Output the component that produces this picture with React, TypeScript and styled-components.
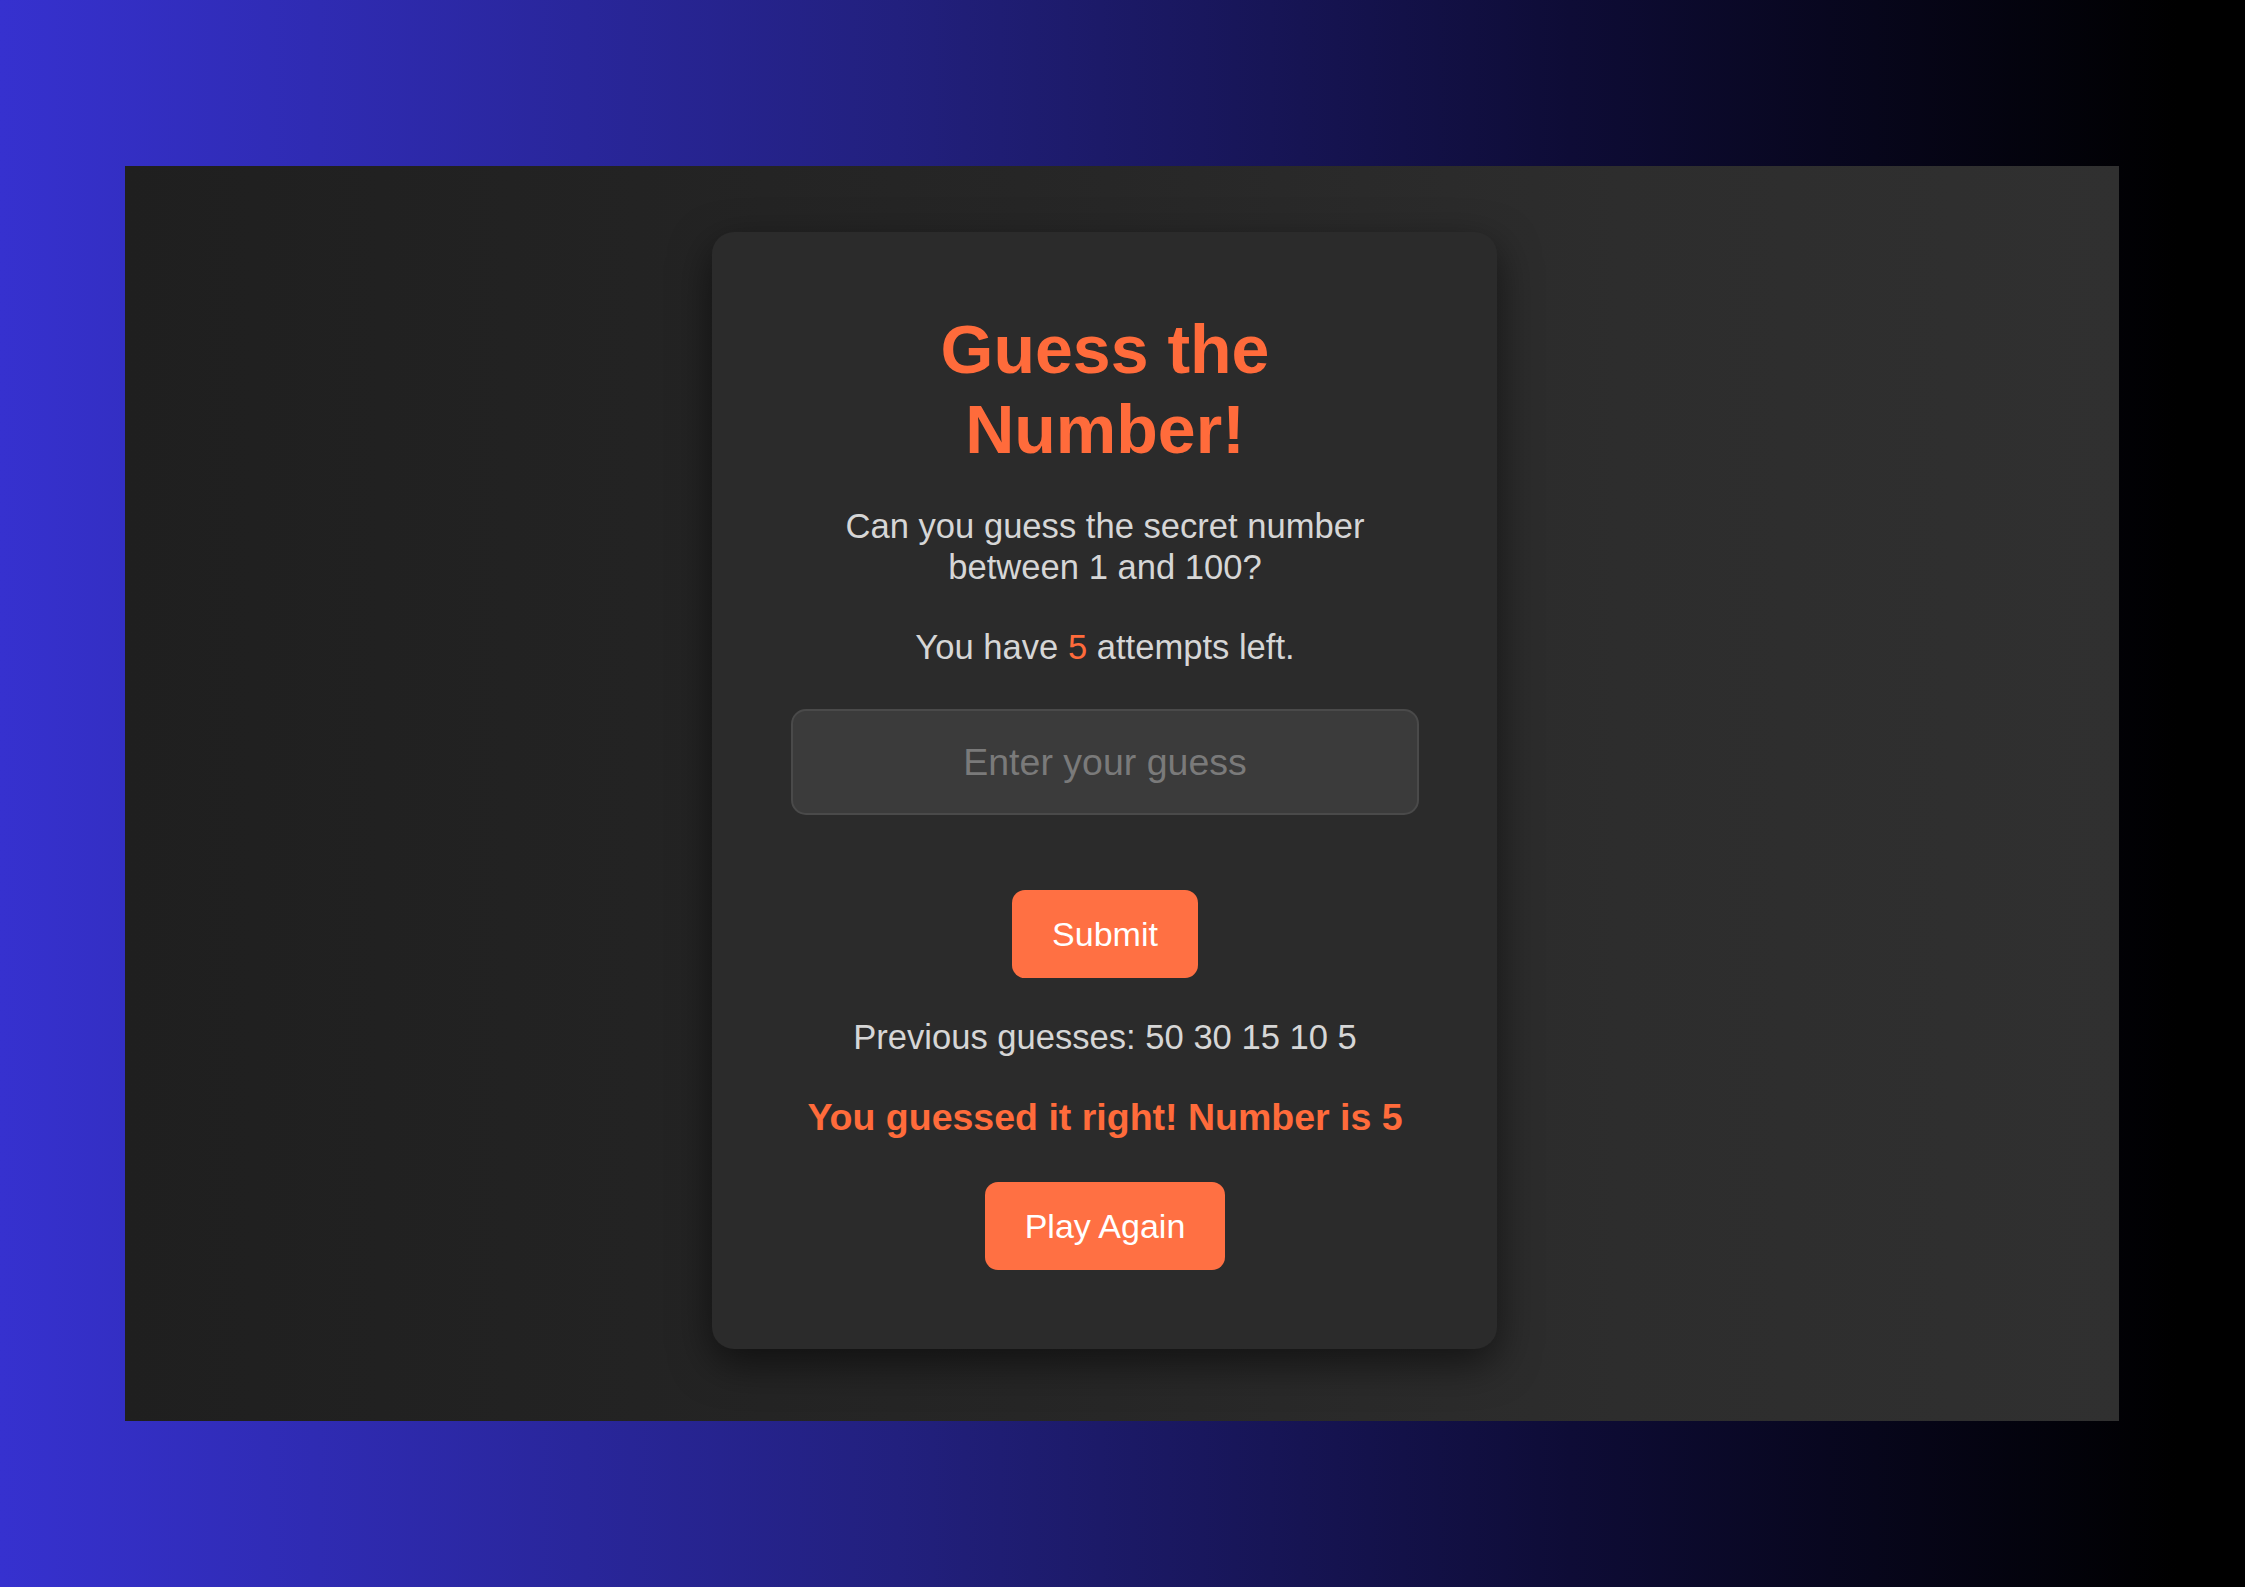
import React from "react";
import styled, { createGlobalStyle } from "styled-components";

const GlobalStyle = createGlobalStyle`
  html, body {
    margin: 0;
    padding: 0;
  }
  body {
    font-family: "Liberation Sans", Arial, sans-serif;
  }
  * { box-sizing: border-box; }
`;

const Backdrop = styled.div`
  width: 2245px;
  height: 1587px;
  padding: 166px 126px 166px 125px;
  background: linear-gradient(90deg, #3631cf 0%, #22207e 40%, #0e0c36 70%, #000000 97%);
`;

const Viewport = styled.div`
  height: 100%;
  display: flex;
  justify-content: center;
  align-items: flex-start;
  padding: 66px 35px 0 0;
  background: linear-gradient(90deg, #1f1f1f 0%, #262626 45%, #2d2d2d 75%, #303030 100%);
`;

const Card = styled.div`
  width: 785px;
  height: 1117px;
  padding: 77px 78px 0 79px;
  background: #2b2b2b;
  border-radius: 22px;
  box-shadow: 0 14px 40px rgba(0, 0, 0, 0.55);
  display: flex;
  flex-direction: column;
  align-items: center;
  text-align: center;
`;

const Title = styled.h1`
  margin: 0;
  max-width: 420px;
  font-size: 68px;
  line-height: 80px;
  font-weight: 700;
  color: #ff6b3b;
`;

const Text = styled.p<{ $top: number }>`
  margin: ${(p) => p.$top}px 0 0;
  font-size: 34.6px;
  line-height: 41px;
  color: #d6d6d6;
`;

const Accent = styled.span`
  color: #ff6b3b;
`;

const GuessInput = styled.input`
  margin-top: 41px;
  width: 100%;
  height: 106px;
  padding: 0;
  border: 2px solid #4a4a4a;
  border-radius: 15px;
  background: #3b3b3b;
  color: #e0e0e0;
  font-family: "Liberation Sans", Arial, sans-serif;
  font-size: 37.5px;
  text-align: center;
  outline: none;
  &::placeholder {
    color: #7a7a7a;
  }
`;

const ActionButton = styled.button<{ $top: number }>`
  margin-top: ${(p) => p.$top}px;
  height: 88px;
  padding: 0 40px;
  border: none;
  border-radius: 13px;
  background: #ff7043;
  color: #ffffff;
  font-family: "Liberation Sans", Arial, sans-serif;
  font-size: 34px;
  cursor: pointer;
`;

const Message = styled.p`
  margin: 38px 0 0;
  font-size: 37.5px;
  line-height: 43px;
  font-weight: 700;
  color: #ff6b3b;
`;

export default function App() {
  const guesses = [50, 30, 15, 10, 5];
  return (
    <>
      <GlobalStyle />
      <Backdrop>
        <Viewport>
          <Card>
            <Title>Guess the Number!</Title>
            <Text $top={37}>Can you guess the secret number between 1 and 100?</Text>
            <Text $top={39}>
              You have <Accent>5</Accent> attempts left.
            </Text>
            <GuessInput type="text" inputMode="numeric" placeholder="Enter your guess" />
            <ActionButton $top={75}>Submit</ActionButton>
            <Text $top={39}>Previous guesses: {guesses.join(" ")}</Text>
            <Message>You guessed it right! Number is 5</Message>
            <ActionButton $top={43}>Play Again</ActionButton>
          </Card>
        </Viewport>
      </Backdrop>
    </>
  );
}
